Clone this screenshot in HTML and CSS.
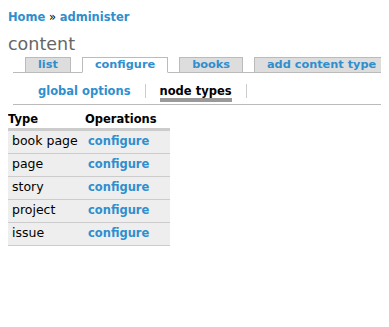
FILE: index.html
```html
<!DOCTYPE html>
<html lang="en">
<head>
    <meta charset="UTF-8">
    <title>content</title>
    <link rel="stylesheet" href="styles.css">
</head>
<body>
    <div class="breadcrumb">
        <a href="#">Home</a> &raquo; <a href="#">administer</a>
    </div>
    <h1 class="title">content</h1>

    <div class="tabs">
        <ul class="primary">
            <li><a href="#">list</a></li>
            <li class="active"><a href="#">configure</a></li>
            <li><a href="#">books</a></li>
            <li><a href="#">add content type</a></li>
        </ul>
        <ul class="secondary">
            <li><a href="#">global options</a></li>
            <li class="active"><a href="#">node types</a></li>
        </ul>
    </div>

    <table class="node-types">
        <colgroup>
            <col class="col-type">
            <col class="col-ops">
        </colgroup>
        <thead>
            <tr>
                <th>Type</th>
                <th>Operations</th>
            </tr>
        </thead>
        <tbody>
            <tr><td>book page</td><td><a href="#">configure</a></td></tr>
            <tr><td>page</td><td><a href="#">configure</a></td></tr>
            <tr><td>story</td><td><a href="#">configure</a></td></tr>
            <tr><td>project</td><td><a href="#">configure</a></td></tr>
            <tr><td>issue</td><td><a href="#">configure</a></td></tr>
        </tbody>
    </table>
</body>
</html>
```

FILE: styles.css
```css
body {
    font-family: "DejaVu Sans", Verdana, sans-serif;
    font-size: 12.5px;
    color: #000;
    background-color: #fff;
    margin: 8px;
}

a {
    color: #2f8fce;
    font-weight: bold;
    font-size: 11.5px;
    text-decoration: none;
}

.breadcrumb {
    margin-top: 2px;
    font-size: 11.5px;
    line-height: 14px;
}

.title {
    margin: 10px 0 0;
    font-size: 17.5px;
    font-weight: normal;
    line-height: 20px;
    color: #666;
}

/* tabs */
.tabs {
    margin: 3px -8px 0 5px;
}

.tabs ul {
    list-style: none;
    margin: 0;
    display: flex;
}

.tabs li {
    flex-shrink: 0;
    white-space: nowrap;
}

.primary {
    padding: 0 0 0 12px;
    border-bottom: 1px solid #bbb;
    height: 15px;
}

.primary li {
    margin-right: 11px;
}

.primary a {
    display: block;
    font-size: 11.3px;
    line-height: 14px;
    padding: 0 12px;
    background-color: #ddd;
    border: 1px solid #bbb;
}

.primary .active a {
    background-color: #fff;
    border-bottom-color: #fff;
}

.secondary {
    padding: 11px 0 6px 11px;
    border-bottom: 1px solid #bbb;
}

.secondary li {
    height: 14px;
    padding: 0 14px;
    border-right: 1px solid #ccc;
}

.secondary a {
    display: block;
    line-height: 14px;
}

.secondary .active a {
    color: #000;
    border-bottom: 4px solid #999;
}

/* table */
.node-types {
    margin-top: 4px;
    border-collapse: collapse;
    table-layout: fixed;
    width: 162px;
}

.col-type {
    width: 77px;
}

.col-ops {
    width: 85px;
}

.node-types th {
    text-align: left;
    font-size: 11.5px;
    line-height: 14px;
    padding: 3px 0 2px;
    border-bottom: 3px solid #ccc;
    white-space: nowrap;
}

.node-types td {
    background-color: #eee;
    border-bottom: 1px solid #ccc;
    line-height: 18px;
    padding: 1px 3px 3px;
    white-space: nowrap;
}

.node-types td:first-child {
    padding-left: 4px;
}
```
